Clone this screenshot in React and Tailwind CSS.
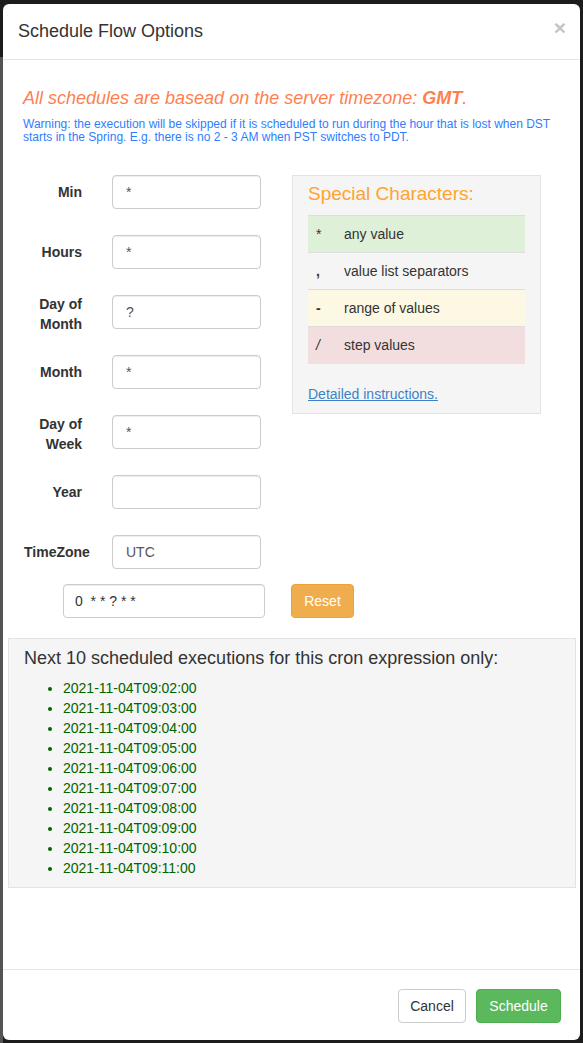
import { useState } from "react";

const fields = [
	{ label: ["Min"], value: "*" },
	{ label: ["Hours"], value: "*" },
	{ label: ["Day of", "Month"], value: "?" },
	{ label: ["Month"], value: "*" },
	{ label: ["Day of", "Week"], value: "*" },
	{ label: ["Year"], value: "" },
	{ label: ["TimeZone"], value: "UTC" },
];

const specials = [
	{ sym: "*", desc: "any value", bg: "bg-[#dff0d8]", symClass: "font-normal" },
	{ sym: ",", desc: "value list separators", bg: "bg-transparent", symClass: "font-bold" },
	{ sym: "-", desc: "range of values", bg: "bg-[#fcf8e3]", symClass: "font-bold" },
	{ sym: "/", desc: "step values", bg: "bg-[#f2dede]", symClass: "font-normal italic" },
];

const executions = [
	"2021-11-04T09:02:00",
	"2021-11-04T09:03:00",
	"2021-11-04T09:04:00",
	"2021-11-04T09:05:00",
	"2021-11-04T09:06:00",
	"2021-11-04T09:07:00",
	"2021-11-04T09:08:00",
	"2021-11-04T09:09:00",
	"2021-11-04T09:10:00",
	"2021-11-04T09:11:00",
];

const inputClass =
	"h-[34px] rounded-[4px] border border-[#ccc] bg-white px-[13px] text-[14px] text-[#555] shadow-[inset_0_1px_1px_rgba(0,0,0,0.075)] outline-none";

const App = () => {
	const [cron, setCron] = useState("0  * * ? * *");

	return (
		<div
			className="flex w-[583px] min-h-[1043px] bg-[#1c1c1c] text-[#333]"
			style={{ fontFamily: '"Liberation Sans", Arial, sans-serif' }}
		>
			<div className="w-[3px] bg-[linear-gradient(to_bottom,#1c1c1c_57px,#545454_57px)]" />
			<div className="mt-[4px] mb-[3px] flex h-[1036px] w-[577px] flex-col rounded-[6px] bg-white">
				{/* header */}
				<div className="flex h-[56px] items-center justify-between border-b border-[#e5e5e5] pl-[15px] pr-[14px]">
					<h4 className="-mt-[2px] text-[18px] leading-[26px] text-[#333]">
						Schedule Flow Options
					</h4>
					<button className="-mt-[8px] text-[21px] font-bold leading-none text-[#c4c4c4]">
						×
					</button>
				</div>

				{/* body */}
				<div className="flex-1 pl-[5px] pr-[4px]">
					<div className="px-[15px] pt-[25px]">
						<h4 className="text-[18px] italic leading-[26px] text-[#ff7f50]">
							All schedules are basead on the server timezone:{" "}
							<b>GMT</b>.
						</h4>
						<p className="mt-[7px] text-[12px] leading-[13px] text-[#2f7dff]">
							Warning: the execution will be skipped if it is scheduled to run
							during the hour that is lost when DST starts in the Spring. E.g.
							there is no 2 - 3 AM when PST switches to PDT.
						</p>
					</div>

					<div className="mt-[31px] flex">
						<div className="w-[284px] pl-[16px]">
							<div className="flex flex-col gap-[26px]">
								{fields.map((f) => (
									<div key={f.label.join(" ")} className="flex h-[34px] items-center">
										<label
											className={`w-[58px] whitespace-nowrap text-right text-[14px] font-bold leading-[20px] text-[#333] ${
												f.label.length > 1 ? "mt-[3px]" : ""
											}`}
										>
											{f.label.map((l, i) => (
												<span key={i} className="block">
													{l}
												</span>
											))}
										</label>
										<input
											readOnly
											value={f.value}
											className={`${inputClass} ml-[30px] w-[149px]`}
										/>
									</div>
								))}
							</div>
						</div>

						<div className="h-[239px] w-[249px] border border-[#e3e3e3] bg-[#f5f5f5] px-[15px] pt-[6px]">
							<h4 className="text-[19px] leading-[24px] text-[#ffa42e]">
								Special Characters:
							</h4>
							<table className="mt-[9px] w-[217px] text-[14px] text-[#333]">
								<tbody>
									{specials.map((s) => (
										<tr key={s.sym} className={`${s.bg} h-[37px] border-t border-[#ddd]`}>
											<td className={`w-[36px] pl-[8px] align-middle ${s.symClass}`}>
												{s.sym}
											</td>
											<td className="align-middle">{s.desc}</td>
										</tr>
									))}
								</tbody>
							</table>
							<a
								href="#"
								className="mt-[21px] block w-fit text-[14px] leading-[18px] text-[#3d82c9] underline"
							>
								Detailed instructions.
							</a>
						</div>
					</div>

					<div className="mt-[15px] flex items-center pl-[55px]">
						<input
							value={cron}
							onChange={(e) => setCron(e.target.value)}
							className={`${inputClass} w-[202px] !px-[11px] !text-[#333]`}
						/>
						<button className="ml-[26px] h-[34px] w-[63px] rounded-[4px] border border-[#eea236] bg-[#f0ad4e] text-[14px] text-white">
							Reset
						</button>
					</div>

					<div className="mt-[20px] h-[250px] border border-[#e3e3e3] bg-[#f5f5f5] pl-[15px] pt-[7px]">
						<h4 className="text-[18px] leading-[24px] text-[#333]">
							Next 10 scheduled executions for this cron expression only:
						</h4>
						<ul className="mt-[8px] list-disc pl-[39px] text-[14px] leading-[20px] text-[#006400] marker:text-[#006400]">
							{executions.map((e) => (
								<li key={e}>{e}</li>
							))}
						</ul>
					</div>
				</div>

				{/* footer */}
				<div className="flex justify-end gap-[10px] border-t border-[#e5e5e5] pb-[17px] pr-[19px] pt-[19px]">
					<button className="h-[34px] w-[68px] rounded-[4px] border border-[#ccc] bg-white text-[14px] text-[#333]">
						Cancel
					</button>
					<button className="h-[34px] w-[85px] rounded-[4px] border border-[#4cae4c] bg-[#5cb85c] text-[14px] text-white">
						Schedule
					</button>
				</div>
			</div>
			<div className="w-[3px] bg-[#1c1c1c]" />
		</div>
	);
};

export default App;
